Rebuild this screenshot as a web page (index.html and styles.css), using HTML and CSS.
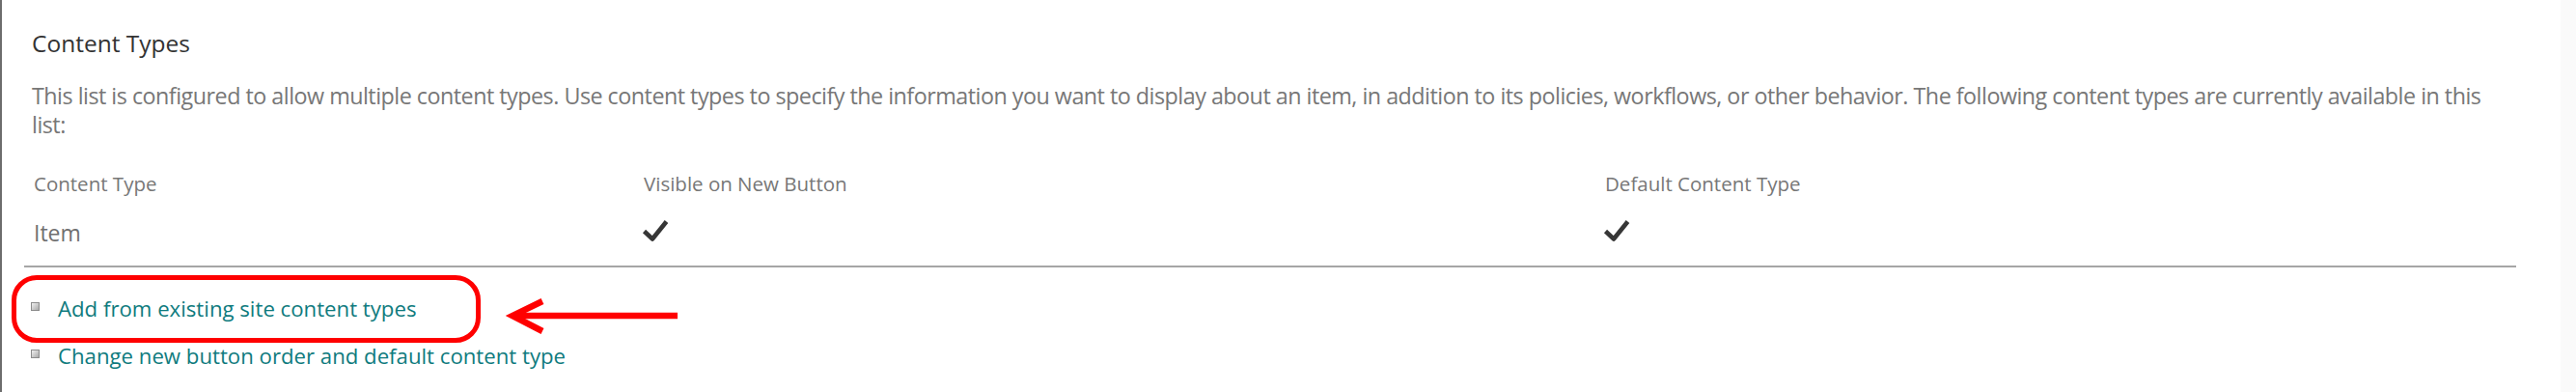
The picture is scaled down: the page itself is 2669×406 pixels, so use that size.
FILE: index.html
```html
<!DOCTYPE html>
<html lang="en">
<head>
    <meta charset="UTF-8">
    <title>List Settings - Content Types</title>
    <link rel="stylesheet" href="styles.css">
</head>
<body>
    <div class="page">
        <main class="settings">
            <h3 class="section-title">Content Types</h3>
            <p class="section-desc">This list is configured to allow multiple content types. Use content types to specify the information you want to display about an item, in addition to its policies, workflows, or other behavior. The following content types are currently available in this list:</p>

            <div class="ct-table">
                <div class="ct-head">Content Type</div>
                <div class="ct-head">Visible on New Button</div>
                <div class="ct-head">Default Content Type</div>

                <div class="ct-cell ct-name">Item</div>
                <div class="ct-cell">
                    <svg class="check" width="28" height="23" viewBox="0 0 28 23"><path d="M2.5 12.5 L11 20.5 L25.5 2.5" /></svg>
                </div>
                <div class="ct-cell">
                    <svg class="check" width="28" height="23" viewBox="0 0 28 23"><path d="M2.5 12.5 L11 20.5 L25.5 2.5" /></svg>
                </div>
            </div>

            <ul class="ct-links">
                <li class="marked">
                    <span class="bullet"></span>
                    <a href="#">Add from existing site content types</a>
                    <!-- annotation arrow -->
                    <svg class="arrow" width="190" height="46" viewBox="0 0 190 46">
                        <line x1="182" y1="22" x2="12" y2="22" />
                        <polyline points="42,7 11,22 42,38" />
                    </svg>
                </li>
                <li>
                    <span class="bullet"></span>
                    <a href="#">Change new button order and default content type</a>
                </li>
            </ul>
        </main>
        <aside class="side-rail"></aside>
    </div>
</body>
</html>
```

FILE: styles.css
```css
body {
    margin: 0;
    background: #fff;
    font-family: 'Open Sans', 'Noto Sans', sans-serif;
    color: #777;
}

.page {
    display: flex;
    min-height: 406px;
    border-left: 2px solid #6d6d6d;
}

.settings {
    flex: 1;
    padding: 28px 46px 0 23px;
}

.side-rail {
    width: 16px;
    background: #fafafa;
}

.section-title {
    margin: 0 0 22px 8px;
    font-size: 24.5px;
    line-height: 34px;
    font-weight: normal;
    color: #333;
}

.section-desc {
    margin: 0 0 32px 8px;
    font-size: 23.3px;
    letter-spacing: -0.5px;
    line-height: 30px;
    color: #777;
}

/* content type table */
.ct-table {
    display: grid;
    grid-template-columns: 632px 996px 1fr;
    border-bottom: 2px solid #a6a6a6;
    padding-bottom: 17px;
}

.ct-head {
    padding-left: 10px;
    font-size: 20.5px;
    line-height: 28px;
    color: #777;
    margin-bottom: 20px;
}

.ct-cell {
    padding-left: 10px;
    height: 34px;
    font-size: 23px;
    line-height: 34px;
    color: #707070;
}

.check {
    display: block;
    margin: 3px 0 0 -2px;
    fill: none;
    stroke: #363636;
    stroke-width: 4.6;
    stroke-linejoin: round;
}

/* links under the table */
.ct-links {
    list-style: none;
    margin: 18px 0 0;
    padding: 0;
}

.ct-links li {
    display: flex;
    align-items: flex-start;
    gap: 19px;
    padding-left: 7px;
    height: 49px;
    line-height: 49px;
    font-size: 22.2px;
}

.ct-links a {
    color: #0f7b7e;
    text-decoration: none;
}

.bullet {
    width: 7px;
    height: 7px;
    margin-top: 18px;
    border: 1px solid #8c8c8c;
    background: linear-gradient(135deg, #f0f0f0, #a9a9a9);
}

.marked {
    position: relative;
}

/* red highlight round the first link */
.marked::before {
    content: "";
    position: absolute;
    left: -13px;
    top: -10px;
    width: 486px;
    height: 70px;
    box-sizing: border-box;
    border: 5px solid #f00;
    border-radius: 26px;
}

.arrow {
    position: absolute;
    left: 495px;
    top: 10px;
    fill: none;
    stroke: #f00;
    stroke-width: 6.5;
}
```
